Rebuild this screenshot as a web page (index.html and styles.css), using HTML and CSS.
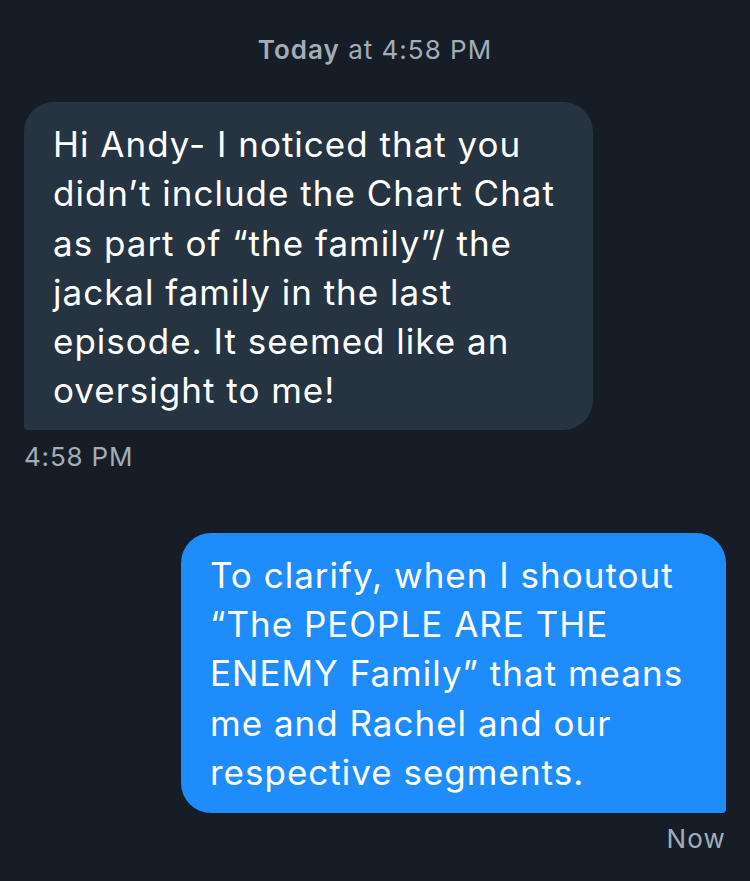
FILE: index.html
```html
<!DOCTYPE html>
<html>
<head>
<meta charset="utf-8">
<link rel="stylesheet" href="styles.css">
</head>
<body>
<div class="chat">
  <div class="day"><b>Today</b> at 4:58 PM</div>
  <div class="msg in">
    <div class="bubble">Hi Andy- I noticed that you<br>didn’t include the Chart Chat<br>as part of “the family”/ the<br>jackal family in the last<br>episode. It seemed like an<br>oversight to me!</div>
    <div class="time">4:58 PM</div>
  </div>
  <div class="msg out">
    <div class="bubble">To clarify, when I shoutout<br>“The PEOPLE ARE THE<br>ENEMY Family” that means<br>me and Rachel and our<br>respective segments.</div>
    <div class="time">Now</div>
  </div>
</div>
</body>
</html>
```
FILE: styles.css
```css
html, body {
  margin: 0;
  padding: 0;
  background: #171d26;
  height: 100%;
}
.chat {
  font-family: Inter, "Noto Sans", sans-serif;
  padding: 32px 24px 0 24px;
  display: flex;
  flex-direction: column;
}
.day {
  text-align: center;
  color: #a3adb9;
  font-size: 26px;
  line-height: 36px;
  letter-spacing: 1px;
  margin-bottom: 34px;
}
.day b {
  font-weight: 600;
}
.msg {
  display: flex;
  flex-direction: column;
}
.msg.in { align-items: flex-start; }
.msg.out { align-items: flex-end; margin-top: 61px; }
.bubble {
  box-sizing: border-box;
  color: #ffffff;
  font-size: 35px;
  line-height: 49.3px;
  letter-spacing: 1px;
  white-space: nowrap;
  padding: 18px 29px 14px 29px;
  border-radius: 30px;
}
.in .bubble {
  background: #263442;
  width: 569px;
  border-bottom-left-radius: 4px;
}
.out .bubble {
  background: #1e8cfb;
  width: 545px;
  padding-top: 18px;
  padding-bottom: 16px;
  border-bottom-right-radius: 4px;
}
.time {
  color: #a3adb9;
  font-size: 26px;
  line-height: 30px;
  letter-spacing: 0.8px;
  margin-top: 12px;
}
.out .time { margin-top: 11px; letter-spacing: 1.2px; }
```
